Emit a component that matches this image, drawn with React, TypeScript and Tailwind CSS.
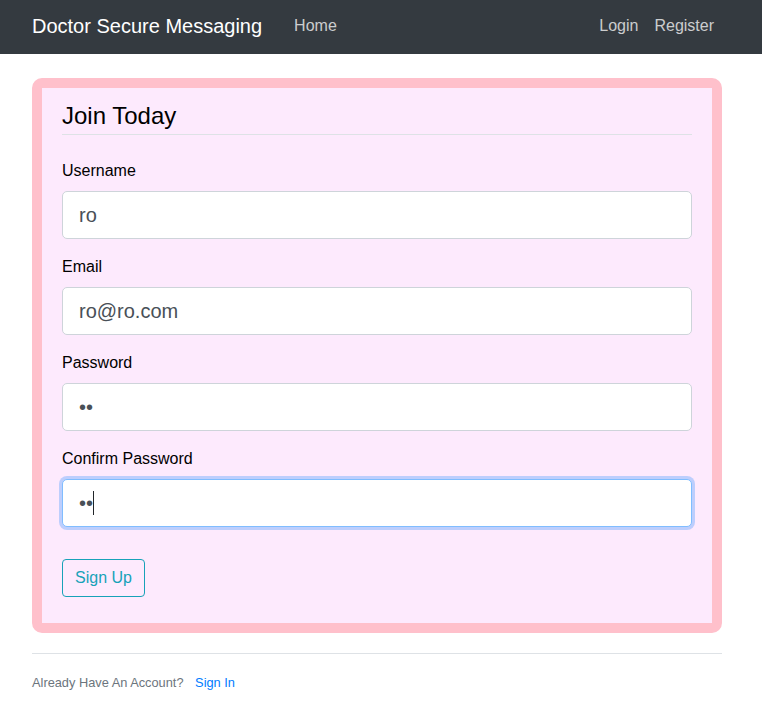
import React from 'react';

const fields = [
  { label: 'Username', type: 'text', value: 'ro' },
  { label: 'Email', type: 'email', value: 'ro@ro.com' },
  { label: 'Password', type: 'password', value: 'ro' },
];

export default function App() {
  return (
    <div className="min-h-screen bg-white text-[16px] leading-[1.5] text-black" style={{ fontFamily: '"Liberation Sans", Arial, sans-serif' }}>
      {/* Top navbar */}
      <header className="h-[54px] bg-[#343a40]">
        <nav className="ml-[32px] flex h-full w-[690px] items-center pb-[2px]">
          <a className="mr-[24px] text-[20px] leading-[30px] text-white" href="#">Doctor Secure Messaging</a>
          <a className="px-[8px] text-[rgba(255,255,255,0.75)]" href="#">Home</a>
          <div className="ml-auto flex">
            <a className="px-[8px] text-[rgba(255,255,255,0.75)]" href="#">Login</a>
            <a className="px-[8px] text-[rgba(255,255,255,0.75)]" href="#">Register</a>
          </div>
        </nav>
      </header>

      <main className="ml-[32px] w-[690px] pt-[24px]">
        <div className="mb-[20px] rounded-[10px] border-[10px] border-[#ffc0cb] bg-[#fdeafd] px-[20px] py-[10px]">
          <form>
            <fieldset className="mb-[16px]">
              <legend className="mb-[24px] w-full border-b border-[#dee2e6] text-[24px] leading-[36px]">Join Today</legend>
              {fields.map((f) => (
                <div key={f.label} className="mb-[16px]">
                  <label className="mb-[8px] block leading-[24px]">{f.label}</label>
                  <input
                    readOnly
                    type={f.type}
                    defaultValue={f.value}
                    className="block h-[48px] w-full rounded-[5px] border border-[#ced4da] bg-white px-[16px] text-[20px] text-[#495057] outline-none"
                  />
                </div>
              ))}
              <div className="mb-[16px]">
                <label className="mb-[8px] block leading-[24px]">Confirm Password</label>
                <div className="relative">
                  <input
                    readOnly
                    type="password"
                    defaultValue="ro"
                    className="block h-[48px] w-full rounded-[5px] border border-[#80bdff] bg-white px-[16px] text-[20px] text-[#495057] shadow-[0_0_0_3px_rgba(0,123,255,0.25)] outline-none"
                  />
                  <span className="absolute left-[31px] top-[12px] h-[24px] w-px bg-[#212529]" />
                </div>
              </div>
            </fieldset>
            <div className="mb-[16px]">
              <button type="button" className="h-[38px] rounded-[4px] border border-[#17a2b8] px-[12px] text-[16px] text-[#17a2b8]">
                Sign Up
              </button>
            </div>
          </form>
        </div>

        <div className="border-t border-[#dee2e6] pt-[16px]">
          <small className="text-[12.8px] text-[#6c757d]">
            Already Have An Account? <a className="ml-[8px] text-[#007bff]" href="#">Sign In</a>
          </small>
        </div>
      </main>
    </div>
  );
}
